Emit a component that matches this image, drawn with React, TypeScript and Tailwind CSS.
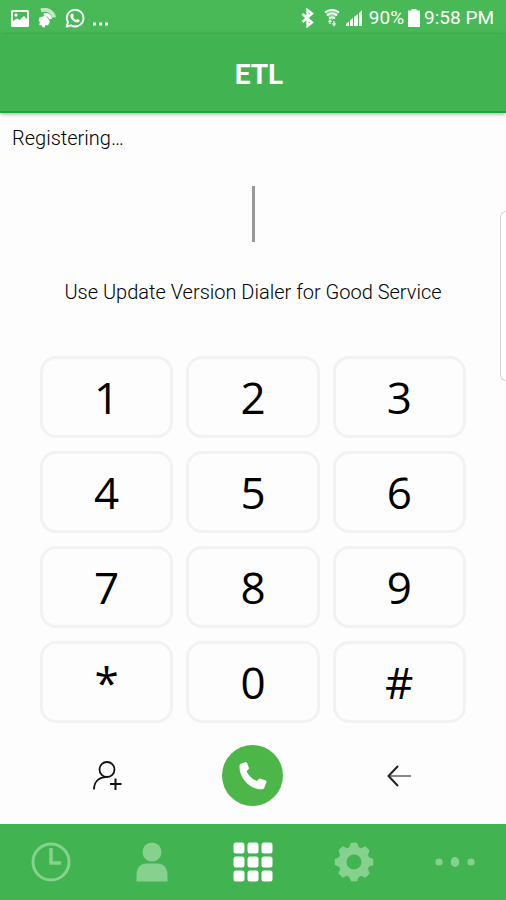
import React, { useState } from 'react';

const KEYS = ['1', '2', '3', '4', '5', '6', '7', '8', '9', '*', '0', '#'];

const GEAR_TEETH = [0, 45, 90, 135, 180, 225, 270, 315];
const GRID_STEPS = [0, 14, 28];

const StatusBar = () => (
  <div className="flex h-[34px] items-center justify-between bg-[#49b958] pr-3 pl-[11px] pt-[2px] text-white">
    <div className="flex items-center gap-2">
      <svg viewBox="0 0 18 17" className="h-[17px] w-[18px]" fill="currentColor">
        <path
          fillRule="evenodd"
          d="M1.5 0h15A1.5 1.5 0 0 1 18 1.5v14a1.5 1.5 0 0 1-1.5 1.5h-15A1.5 1.5 0 0 1 0 15.5v-14A1.5 1.5 0 0 1 1.5 0ZM2 2v9l4-2.5 2.5 1.5 4.5-4 3 3V2H2Zm3 1.500a1.600 1.600 0 1 1 0 3.200 1.600 1.600 0 0 1 0-3.200Z"
        />
      </svg>
      <svg viewBox="0 0 20 20" className="h-5 w-5" fill="none" stroke="currentColor">
        <path d="M4 2.500C10 .500 16 3.500 17 9.500" strokeWidth="4" opacity=".65" />
        <path d="M7 7c3-1.500 6 .5 6.500 4" strokeWidth="3" />
        <path
          d="M2.500 9.500 9 7.500l4 6-2 4-2.500-.5L7.500 19.500 5 19l.5-1L2 16.500l1-2-1.500-2Z"
          fill="currentColor"
          stroke="none"
        />
      </svg>
      <svg viewBox="0 0 24 24" className="h-5 w-5" fill="none" stroke="currentColor">
        <path d="M2 22.300 3.500 17A10 10 0 1 1 7.300 20.800Z" strokeWidth="2.300" strokeLinejoin="round" />
        <path
          d="M8.800 6.500c.4 0 .6.1.8.5l.9 2c.1.4 0 .7-.9 1.700.9 1.800 2.100 2.900 3.900 3.700.9-1 1.100-1.400 1.600-1.200l2.200 1.100c.5.3 0 2-.9 2.600-2.200 1.400-5.300-.2-7.300-2.100C6.800 12.500 5.700 9.600 7 7.500c.5-.8 1-1 1.800-1Z"
          fill="currentColor"
          stroke="none"
        />
      </svg>
      <svg viewBox="0 0 15 20" className="h-5 w-[15px]" fill="currentColor">
        <path d="M0 14.500h3v3H0zM6 14.500h3v3H6zM12 14.500h3v3h-3z" />
      </svg>
    </div>
    <div className="flex items-center text-[19px] leading-6">
      <svg viewBox="0 0 14 20" className="mr-2 h-5 w-[14px]" fill="none" stroke="currentColor" strokeWidth="2.400">
        <path d="m1.500 6 9.500 8.500-4.500 3.500V2L11 5.500 1.500 14" />
      </svg>
      <svg viewBox="0 0 18 20" className="mr-1 h-5 w-[18px]" fill="none" stroke="currentColor">
        <path d="M2 4.500c4-3.500 10-3.500 14 0M4 7.500c3-2.500 7-2.500 10 0M6 10.500c2-1.500 4-1.500 6 0" strokeWidth="1.800" />
        <path d="M9 12.500 2 4.500C6 1 12 1 16 4.500Z" fill="currentColor" opacity=".35" stroke="none" />
        <path d="M7 12v4m-1.500-2L7 12l1.500 2M11 13v4.500m-1.500-2 1.500 2 1.500-2" strokeWidth="1.200" />
      </svg>
      <svg viewBox="0 0 18 18" className="mr-[6px] h-[18px] w-[18px]" fill="currentColor">
        <path d="M1 17v-2L4 12.500V17zM5 17v-5.500L8 9v8zM9 17V8l4-3v12zM14 17V4l3-3v16z" />
      </svg>
      <span>90%</span>
      <svg viewBox="0 0 12 18" className="mx-1 h-[18px] w-3" fill="currentColor">
        <path d="M3.500 0h5v1.500H12V18H0V1.500h3.500z" />
      </svg>
      <span>9:58 PM</span>
    </div>
  </div>
);

const ClockIcon = () => (
  <svg viewBox="0 0 40 40" className="h-10 w-10" fill="none" stroke="currentColor">
    <circle cx="20" cy="20" r="18" strokeWidth="3" />
    <path d="M20 6v15h10" strokeWidth="3.500" />
  </svg>
);

const PersonIcon = () => (
  <svg viewBox="0 0 40 40" className="h-10 w-10" fill="currentColor">
    <circle cx="20" cy="10" r="9.500" />
    <path d="M4.500 39.500V33c0-7 4-11.500 10-11.500h11c6 0 10 4.500 10 11.500v6.500z" />
  </svg>
);

const GridIcon = () => (
  <svg viewBox="0 0 40 40" className="h-10 w-10" fill="currentColor">
    {GRID_STEPS.map((y) => GRID_STEPS.map((x) => <rect key={`${x}-${y}`} x={x + 0.5} y={y + 0.5} width="11" height="11" rx="2.500" />))}
  </svg>
);

const GearIcon = () => (
  <svg viewBox="0 0 40 40" className="h-10 w-10">
    <circle cx="20" cy="20" r="11.500" fill="none" stroke="currentColor" strokeWidth="8" />
    {GEAR_TEETH.map((a) => (
      <path key={a} d="M14.500 7 17 .8h6L25.500 7z" fill="currentColor" transform={`rotate(${a} 20 20)`} />
    ))}
  </svg>
);

const MoreIcon = () => (
  <svg viewBox="0 0 40 40" className="h-10 w-10" fill="currentColor">
    <circle cx="4" cy="20" r="3.600" />
    <ellipse cx="20" cy="20" rx="4.300" ry="5" />
    <circle cx="36" cy="20" r="3.600" />
  </svg>
);

const TABS = [
  { id: 'recents', label: 'Recents', Icon: ClockIcon },
  { id: 'contacts', label: 'Contacts', Icon: PersonIcon },
  { id: 'keypad', label: 'Keypad', Icon: GridIcon },
  { id: 'settings', label: 'Settings', Icon: GearIcon },
  { id: 'more', label: 'More', Icon: MoreIcon },
];

export default function App() {
  const [number, setNumber] = useState('');
  const [tab, setTab] = useState('keypad');

  return (
    <div className="relative flex min-h-screen flex-col bg-[#fdfdfd] font-['Roboto',sans-serif]">
      <StatusBar />
      <header className="z-10 flex h-[79px] items-center justify-center border-b-2 border-[#1fa443] bg-[#41b350] pt-1 pl-3 shadow-[0_1px_4px_rgba(0,0,0,0.35)]">
        <h1 className="text-[28px] leading-8 font-bold text-white">ETL</h1>
      </header>

      <main className="flex flex-1 flex-col">
        <p className="mt-[13px] px-3 text-[20px] leading-6 font-light text-black">Registering…</p>

        <div className="relative mt-9 flex h-14 items-center justify-center">
          <input
            type="tel"
            aria-label="Phone number"
            value={number}
            onChange={(e) => setNumber(e.target.value)}
            className="h-14 w-full bg-transparent text-center text-[44px] text-black caret-[#999] outline-none"
          />
          {!number && <span className="pointer-events-none absolute h-14 w-[3px] bg-[#999]" />}
        </div>

        <p className="mt-[38px] text-center text-[20px] leading-6 font-light text-black">Use Update Version Dialer for Good Service</p>

        <div className="mx-10 mt-[52px] grid grid-cols-3 gap-[13px]">
          {KEYS.map((key) => (
            <button
              key={key}
              onClick={() => setNumber(number + key)}
              className="flex h-[82px] items-center justify-center rounded-[16px] border-[3px] border-[#f2f2f2] font-['Open_Sans',sans-serif] text-[44px] leading-none text-black"
            >
              {key}
            </button>
          ))}
        </div>

        <div className="mx-10 mt-[22px] mb-[18px] grid grid-cols-3 items-center justify-items-center gap-[13px]">
          <button aria-label="Add contact">
            <svg viewBox="0 0 30 30" className="h-[30px] w-[30px]" fill="none" stroke="#111" strokeWidth="1.800">
              <circle cx="15" cy="8.500" r="7.500" />
              <path d="M2 28.500C2 21.500 6 16.500 14 16" />
              <path d="M23.500 17.500v11.500M18 23h11.500" strokeWidth="2" />
            </svg>
          </button>
          <button aria-label="Call" className="flex h-[61px] w-[61px] items-center justify-center rounded-full bg-[#4cb748]">
            <svg viewBox="0 0 28 28" className="h-7 w-7" fill="#fff">
              <path d="M2.300 1.600 6.500.3c.8-.2 1.300.1 1.600.8L9.800 5.500c.3.8.1 1.300-.5 1.900L7.500 9.200c2.300 4.500 5.400 7.700 10.300 9.900l2-2c.6-.6 1.200-.7 1.900-.3l5 1.700c.8.3 1 .8.8 1.600l-2 5.100c-.4 1.400-1.400 2-2.800 2.100C10.800 27.300.5 16.500.5 4.500c0-1.500.5-2.500 1.800-2.900Z" />
            </svg>
          </button>
          <button aria-label="Delete" onClick={() => setNumber(number.slice(0, -1))}>
            <svg viewBox="0 0 24 24" className="h-6 w-6" fill="none" strokeWidth="2">
              <path d="M1.500 12H24" stroke="#888" />
              <path d="M11 2 1.500 12 11 22" stroke="#222" />
            </svg>
          </button>
        </div>
      </main>

      <nav className="grid h-[76px] grid-cols-5 bg-[#41b350]">
        {TABS.map(({ id, label, Icon }) => (
          <button
            key={id}
            aria-label={label}
            onClick={() => setTab(id)}
            className={tab === id ? 'flex items-center justify-center text-white' : 'flex items-center justify-center text-[#87d18f]'}
          >
            <Icon />
          </button>
        ))}
      </nav>

      {/* edge panel handle */}
      <div className="absolute top-[211px] right-0 h-[170px] w-[6px] rounded-l-[6px] border border-r-0 border-[#d4d4d4] bg-white" />
    </div>
  );
}
